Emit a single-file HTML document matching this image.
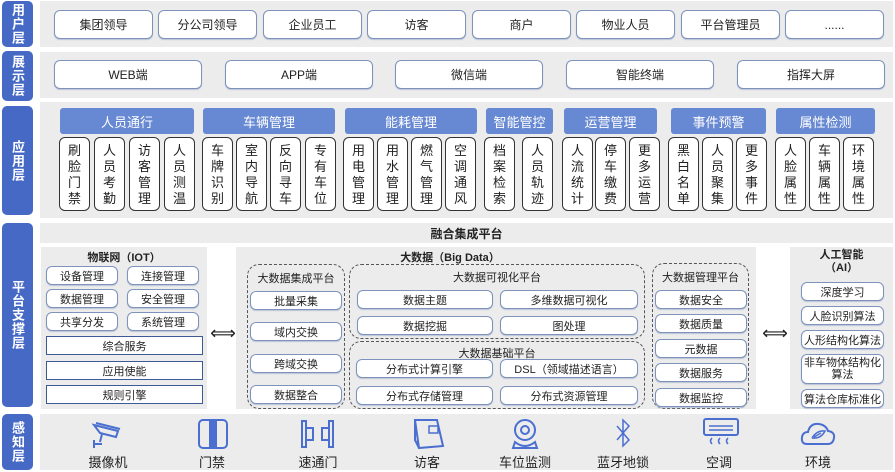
<!DOCTYPE html><html><head><meta charset="utf-8"><style>
*{margin:0;padding:0;box-sizing:border-box}
body{width:895px;height:472px;background:#fff;position:relative;overflow:hidden;font-family:"Liberation Sans","Noto Sans CJK SC",sans-serif;font-size:12px;color:#222}
div{position:absolute}
.lab{background:#4569c5;color:#fff;font-weight:bold;font-size:13px;border-radius:5px;display:flex;align-items:center;justify-content:center;text-align:center;line-height:15px;left:2px;width:31px;writing-mode:vertical-rl;letter-spacing:1px}
.g{background:#ececec}
.b{background:#fff;border:1px solid #7d93bc;border-radius:6px;display:flex;align-items:center;justify-content:center;box-shadow:0 1px 1px #b8c2d6}
.h{background:#6788d2;color:#fff;border-radius:3px;display:flex;align-items:center;justify-content:center;font-size:13px}
.v{background:#fff;border:1.3px solid #333;border-radius:6px;top:137px;height:74px;width:31px;text-align:center;font-size:13px;line-height:16px;padding-top:5px}
.s{background:#fff;border:1.5px solid #3d5a94;display:flex;align-items:center;justify-content:center}
.d{border:1.5px dashed #555;border-radius:12px}
.t{text-align:center;white-space:nowrap}
.ic{top:418px}
.sl{top:452px;font-size:13px;text-align:center;width:80px}
</style></head><body>
<div class="lab" style="top:1px;height:46px">用户层</div>
<div class="lab" style="top:51px;height:50px">展示层</div>
<div class="lab" style="top:106px;height:109px">应用层</div>
<div class="lab" style="top:223px;height:184px">平台支撑层</div>
<div class="lab" style="top:414px;height:56px">感知层</div>

<div class="g" style="left:40px;top:1px;width:853px;height:46px"></div>
<div class="g" style="left:40px;top:52px;width:853px;height:46px"></div>
<div class="g" style="left:40px;top:102px;width:853px;height:116px"></div>
<div class="g" style="left:40px;top:223px;width:853px;height:20px"></div>
<div class="g" style="left:41px;top:247px;width:166px;height:162px"></div>
<div class="g" style="left:236px;top:247px;width:520px;height:162px"></div>
<div class="g" style="left:790px;top:247px;width:103px;height:162px"></div>
<div class="g" style="left:40px;top:414px;width:853px;height:56px"></div>

<div class="b" style="left:54px;top:10px;width:99px;height:29px">集团领导</div>
<div class="b" style="left:158px;top:10px;width:99px;height:29px">分公司领导</div>
<div class="b" style="left:263px;top:10px;width:99px;height:29px">企业员工</div>
<div class="b" style="left:367px;top:10px;width:99px;height:29px">访客</div>
<div class="b" style="left:472px;top:10px;width:99px;height:29px">商户</div>
<div class="b" style="left:576px;top:10px;width:99px;height:29px">物业人员</div>
<div class="b" style="left:681px;top:10px;width:99px;height:29px">平台管理员</div>
<div class="b" style="left:785px;top:10px;width:99px;height:29px">......</div>

<div class="b" style="left:54px;top:60px;width:148px;height:29px">WEB端</div>
<div class="b" style="left:225px;top:60px;width:148px;height:29px">APP端</div>
<div class="b" style="left:395px;top:60px;width:148px;height:29px">微信端</div>
<div class="b" style="left:566px;top:60px;width:148px;height:29px">智能终端</div>
<div class="b" style="left:737px;top:60px;width:148px;height:29px">指挥大屏</div>

<div class="h" style="left:60px;top:108px;width:134px;height:26px">人员通行</div>
<div class="h" style="left:203px;top:108px;width:132px;height:26px">车辆管理</div>
<div class="h" style="left:345px;top:108px;width:132px;height:26px">能耗管理</div>
<div class="h" style="left:486px;top:108px;width:67px;height:26px">智能管控</div>
<div class="h" style="left:564px;top:108px;width:93px;height:26px">运营管理</div>
<div class="h" style="left:671px;top:108px;width:95px;height:26px">事件预警</div>
<div class="h" style="left:776px;top:108px;width:99px;height:26px">属性检测</div>

<div class="v" style="left:59px">刷<br>脸<br>门<br>禁</div>
<div class="v" style="left:94px">人<br>员<br>考<br>勤</div>
<div class="v" style="left:129px">访<br>客<br>管<br>理</div>
<div class="v" style="left:164px">人<br>员<br>测<br>温</div>
<div class="v" style="left:202px">车<br>牌<br>识<br>别</div>
<div class="v" style="left:236px">室<br>内<br>导<br>航</div>
<div class="v" style="left:270px">反<br>向<br>寻<br>车</div>
<div class="v" style="left:305px">专<br>有<br>车<br>位</div>
<div class="v" style="left:343px">用<br>电<br>管<br>理</div>
<div class="v" style="left:377px">用<br>水<br>管<br>理</div>
<div class="v" style="left:411px">燃<br>气<br>管<br>理</div>
<div class="v" style="left:445px">空<br>调<br>通<br>风</div>
<div class="v" style="left:484px">档<br>案<br>检<br>索</div>
<div class="v" style="left:522px">人<br>员<br>轨<br>迹</div>
<div class="v" style="left:562px">人<br>流<br>统<br>计</div>
<div class="v" style="left:595px">停<br>车<br>缴<br>费</div>
<div class="v" style="left:629px">更<br>多<br>运<br>营</div>
<div class="v" style="left:668px">黑<br>白<br>名<br>单</div>
<div class="v" style="left:702px">人<br>员<br>聚<br>集</div>
<div class="v" style="left:736px">更<br>多<br>事<br>件</div>
<div class="v" style="left:775px">人<br>脸<br>属<br>性</div>
<div class="v" style="left:809px">车<br>辆<br>属<br>性</div>
<div class="v" style="left:843px">环<br>境<br>属<br>性</div>

<div class="t" style="left:40px;width:853px;top:225px;font-weight:bold;font-size:12px">融合集成平台</div>

<div class="t" style="left:41px;width:166px;top:249px;font-weight:bold;font-size:11px">物联网（IOT）</div>
<div class="b" style="left:46px;top:266px;width:72px;height:19px;font-size:11px">设备管理</div>
<div class="b" style="left:127px;top:266px;width:72px;height:19px;font-size:11px">连接管理</div>
<div class="b" style="left:46px;top:289px;width:72px;height:19px;font-size:11px">数据管理</div>
<div class="b" style="left:127px;top:289px;width:72px;height:19px;font-size:11px">安全管理</div>
<div class="b" style="left:46px;top:312px;width:72px;height:19px;font-size:11px">共享分发</div>
<div class="b" style="left:127px;top:312px;width:72px;height:19px;font-size:11px">系统管理</div>
<div class="s" style="left:46px;top:336px;width:157px;height:19px;font-size:11px">综合服务</div>
<div class="s" style="left:46px;top:361px;width:157px;height:19px;font-size:11px">应用使能</div>
<div class="s" style="left:46px;top:385px;width:157px;height:19px;font-size:11px">规则引擎</div>

<div class="t" style="left:210px;top:323px;width:26px;font-size:18px">⟺</div>
<div class="t" style="left:762px;top:323px;width:26px;font-size:18px">⟺</div>

<div class="t" style="left:350px;width:200px;top:249px;font-weight:bold;font-size:11px">大数据（Big Data）</div>
<div class="d" style="left:247px;top:264px;width:98px;height:145px"></div>
<div class="t" style="left:247px;width:98px;top:270px;font-size:11px">大数据集成平台</div>
<div class="b" style="left:250px;top:291px;width:92px;height:19px;font-size:11px">批量采集</div>
<div class="b" style="left:250px;top:322px;width:92px;height:19px;font-size:11px">域内交换</div>
<div class="b" style="left:250px;top:354px;width:92px;height:19px;font-size:11px">跨域交换</div>
<div class="b" style="left:250px;top:385px;width:92px;height:19px;font-size:11px">数据整合</div>

<div class="d" style="left:349px;top:264px;width:296px;height:75px"></div>
<div class="t" style="left:349px;width:296px;top:269px;font-size:11px">大数据可视化平台</div>
<div class="b" style="left:357px;top:290px;width:136px;height:19px;font-size:11px">数据主题</div>
<div class="b" style="left:500px;top:290px;width:138px;height:19px;font-size:11px">多维数据可视化</div>
<div class="b" style="left:357px;top:316px;width:136px;height:19px;font-size:11px">数据挖掘</div>
<div class="b" style="left:500px;top:316px;width:138px;height:19px;font-size:11px">图处理</div>

<div class="d" style="left:349px;top:341px;width:296px;height:68px"></div>
<div class="t" style="left:349px;width:296px;top:345px;font-size:11px">大数据基础平台</div>
<div class="b" style="left:356px;top:359px;width:137px;height:19px;font-size:11px">分布式计算引擎</div>
<div class="b" style="left:500px;top:359px;width:138px;height:19px;font-size:11px">DSL（领域描述语言）</div>
<div class="b" style="left:356px;top:386px;width:137px;height:19px;font-size:11px">分布式存储管理</div>
<div class="b" style="left:500px;top:386px;width:138px;height:19px;font-size:11px">分布式资源管理</div>

<div class="d" style="left:652px;top:263px;width:97px;height:146px"></div>
<div class="t" style="left:652px;width:97px;top:269px;font-size:11px">大数据管理平台</div>
<div class="b" style="left:655px;top:290px;width:92px;height:19px;font-size:11px">数据安全</div>
<div class="b" style="left:655px;top:314px;width:92px;height:19px;font-size:11px">数据质量</div>
<div class="b" style="left:655px;top:339px;width:92px;height:19px;font-size:11px">元数据</div>
<div class="b" style="left:655px;top:363px;width:92px;height:19px;font-size:11px">数据服务</div>
<div class="b" style="left:655px;top:388px;width:92px;height:19px;font-size:11px">数据监控</div>

<div class="t" style="left:790px;width:103px;top:249px;font-weight:bold;font-size:11px;line-height:13px">人工智能<br>（AI）</div>
<div class="b" style="left:801px;top:282px;width:83px;height:19px;font-size:11px">深度学习</div>
<div class="b" style="left:801px;top:306px;width:83px;height:19px;font-size:11px">人脸识别算法</div>
<div class="b" style="left:801px;top:330px;width:83px;height:19px;font-size:11px">人形结构化算法</div>
<div class="b" style="left:801px;top:354px;width:83px;height:30px;font-size:11px;line-height:12px;text-align:center">非车物体结构化<br>算法</div>
<div class="b" style="left:801px;top:389px;width:83px;height:19px;font-size:11px">算法仓库标准化</div>

<svg style="position:absolute;left:0;top:0" width="895" height="472" fill="none" stroke="#4a6fd0" stroke-width="2">
<g transform="translate(92,420)"><path d="M2 5 L26 11 L24 17 L8 13 Z"/><path d="M4 3 L28 9"/><path d="M10 14 L8 22 M2 20 L2 28 M2 24 L10 24"/></g>
<g transform="translate(199,420)"><rect x="0" y="0" width="28" height="28" rx="4"/><rect x="11" y="1" width="6" height="26" fill="#4a6fd0"/></g>
<g transform="translate(301,420)"><path d="M1 1 H5 V27 H1 Z M5 8 H12 V20 H5 M32 1 H28 V27 H32 Z M28 8 H21 V20 H28"/></g>
<g transform="translate(413,418)"><path d="M2 2 L24 2 L30 28 L6 30 Z M2 2 L2 22 L6 30"/><rect x="16" y="8" width="9" height="7" stroke-width="1.5"/></g>
<g transform="translate(511,418)"><circle cx="14" cy="12" r="10"/><circle cx="14" cy="12" r="4"/><path d="M4 24 Q14 32 24 24 L26 30 H2 Z"/></g>
<g transform="translate(615,418)"><path d="M2 8 L14 22 L8 28 V2 L14 8 L2 22" stroke-width="1.5"/></g>
<g transform="translate(703,418)"><rect x="1" y="1" width="34" height="16" rx="2"/><path d="M6 8 H30 M6 12 H30" stroke-width="1.5"/><path d="M9 20 q-3 3 0 6 M17 20 q-3 3 0 6 M25 20 q-3 3 0 6" stroke-width="1.5"/></g>
<g transform="translate(801,420)"><path d="M6 24 Q0 24 1 17 Q2 12 7 12 Q9 3 18 4 Q25 5 27 11 Q34 12 33 18 Q32 24 27 24 Z"/><path d="M11 18 Q16 10 24 11 Q20 19 11 18 M13 17 L20 13" stroke-width="1.5"/></g>
</svg>
<div class="sl" style="left:68px">摄像机</div>
<div class="sl" style="left:172px">门禁</div>
<div class="sl" style="left:278px">速通门</div>
<div class="sl" style="left:387px">访客</div>
<div class="sl" style="left:485px">车位监测</div>
<div class="sl" style="left:583px">蓝牙地锁</div>
<div class="sl" style="left:679px">空调</div>
<div class="sl" style="left:778px">环境</div>
</body></html>
